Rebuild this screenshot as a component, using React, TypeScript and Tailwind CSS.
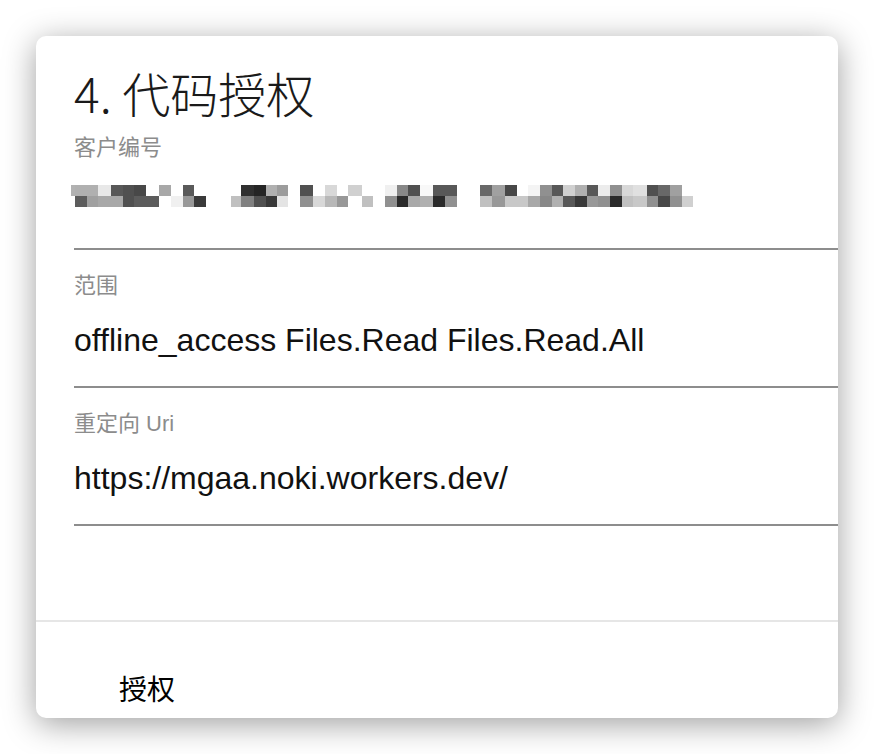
import React from "react";

type Cell = [number, string, string];

const cells: Cell[] = [
  [4, "b2", "ff"],
  [12, "b0", "5c"],
  [10.6, "b0", "a0"],
  [13.4, "e8", "a8"],
  [11.6, "58", "a8"],
  [11.7, "50", "50"],
  [11.7, "48", "5c"],
  [13.3, "ff", "5c"],
  [11.7, "a8", "ff"],
  [11.6, "ff", "f0"],
  [11.7, "5a", "98"],
  [11.7, "ff", "3a"],
  [25, "ff", "ff"],
  [10, "ff", "c0"],
  [13.3, "30", "80"],
  [11.7, "25", "50"],
  [11.6, "b0", "38"],
  [11, "9c", "e4"],
  [11.7, "ff", "ff"],
  [13, "50", "90"],
  [12, "ff", "d8"],
  [12, "d8", "b8"],
  [11, "ff", "98"],
  [14, "d0", "ff"],
  [11, "ff", "c0"],
  [12, "ff", "ff"],
  [12, "f0", "90"],
  [11, "88", "2a"],
  [12, "50", "a8"],
  [13, "f8", "b0"],
  [12, "58", "2a"],
  [12, "58", "90"],
  [23, "ff", "ff"],
  [12, "68", "c0"],
  [13, "a0", "98"],
  [12, "48", "c8"],
  [11, "ff", "c8"],
  [12, "f4", "a8"],
  [12, "90", "88"],
  [11, "58", "b0"],
  [12, "d0", "58"],
  [12, "b0", "38"],
  [11, "58", "98"],
  [12, "ec", "90"],
  [12, "90", "2a"],
  [11, "d8", "c0"],
  [14, "e0", "c8"],
  [11, "50", "90"],
  [12, "68", "48"],
  [12, "a0", "90"],
  [11, "ff", "d0"],
];

const g = (h: string) => `#${h}${h}${h}`;

function Mosaic() {
  return (
    <div className="flex h-[22px] ml-[-3px] blur-[0.7px]">
      {cells.map(([w, t, b], i) => (
        <div key={i} className="flex flex-col shrink-0" style={{ width: w }}>
          <div className="h-[11px]" style={{ backgroundColor: g(t) }} />
          <div className="h-[11px]" style={{ backgroundColor: g(b) }} />
        </div>
      ))}
    </div>
  );
}

function Field({ label, value }: { label: string; value: string }) {
  return (
    <div className="pt-[25px] pb-[30px] border-b-2 border-[#8d8d8d]">
      <div className="text-[22px] leading-[22px] text-[#8c8c8c]">{label}</div>
      <div className="mt-[27px] text-[32px] leading-[32px] text-[#111]">{value}</div>
    </div>
  );
}

export default function App() {
  return (
    <div className="w-[874px] h-[754px] bg-white p-[36px] font-[family-name:'Liberation_Sans','Noto_Sans_CJK_SC',sans-serif]">
      <div className="h-full bg-white rounded-[10px] shadow-[0_6px_32px_rgba(0,0,0,0.38)] flex flex-col overflow-hidden">
        <div className="pl-[38px] pt-[32px]">
          <div className="text-[48px] leading-[48px] font-light text-[#1a1a1a] font-[family-name:'Noto_Sans_CJK_SC',sans-serif]">
            4. 代码授权
          </div>
          <div className="mt-[21px] text-[22px] leading-[22px] text-[#8c8c8c]">客户编号</div>
          <div className="mt-[26px]">
            <Mosaic />
          </div>
          <div className="mt-[41px] border-b-2 border-[#8d8d8d]" />
          <Field label="范围" value="offline_access Files.Read Files.Read.All" />
          <Field label="重定向 Uri" value="https://mgaa.noki.workers.dev/" />
        </div>
        <div className="mt-[94px] border-t-2 border-[#e6e6e6] flex-1 pl-[83px] pt-[52px]">
          <div className="text-[28px] leading-[28px] text-black font-[family-name:'Noto_Sans_CJK_SC',sans-serif]">
            授权
          </div>
        </div>
      </div>
    </div>
  );
}
